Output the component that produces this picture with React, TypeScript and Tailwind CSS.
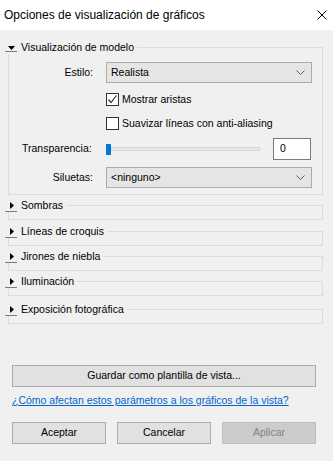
import { ReactNode } from 'react'

const font = { fontFamily: '"Liberation Sans", Arial, sans-serif' }

function Toggle({ open }: { open: boolean }) {
  if (open) {
    return (
      <div className="flex flex-col items-center w-[12px] h-[14px] pt-[6px]">
        <svg width="7" height="4" viewBox="0 0 7 4">
          <polygon points="0,0 7,0 3.5,4" fill="#000" />
        </svg>
        <div className="mt-[1px] h-px w-[12px] bg-[#7a7a7a]" />
      </div>
    )
  }
  return (
    <div className="flex flex-col items-center w-[12px] h-[14px] pt-[4px]">
      <svg width="4" height="7" viewBox="0 0 4 7" className="ml-[2px]">
        <polygon points="0,0 4,3.5 0,7" fill="#000" />
      </svg>
      <div className="mt-[2px] h-px w-[12px] bg-[#7a7a7a]" />
    </div>
  )
}

function Header({ title, open }: { title: string; open: boolean }) {
  return (
    <div className="flex h-[14px]">
      <Toggle open={open} />
      <span className="ml-[4px] leading-[14px] whitespace-nowrap">{title}</span>
      <div className="flex-1 ml-[3px] mt-[7px] h-[7px] border-t border-r border-[#dcdcdc]" />
    </div>
  )
}

function Section({ title, className }: { title: string; className: string }) {
  return (
    <div className={`ml-[5px] w-[318px] ${className}`}>
      <Header title={title} open={false} />
      <div className="ml-[3px] h-[8px] border-l border-r border-b border-[#dcdcdc]" />
    </div>
  )
}

function Chevron() {
  return (
    <svg width="9" height="5" viewBox="0 0 9 5">
      <polyline points="0.5,0.5 4.5,4.5 8.5,0.5" fill="none" stroke="#606060" strokeWidth="1" />
    </svg>
  )
}

function Select({ value }: { value: string }) {
  return (
    <div className="ml-[13px] w-[206px] h-[21px] bg-[#e5e5e5] border border-[#acacac] flex items-center justify-between pl-[4px] pr-[6px]">
      <span>{value}</span>
      <Chevron />
    </div>
  )
}

function Checkbox({ checked, children }: { checked: boolean; children: ReactNode }) {
  return (
    <div className="flex items-center h-[13px] ml-[97px]">
      <div className="w-[13px] h-[13px] bg-white border border-[#333] flex items-center justify-center">
        {checked && (
          <svg width="11" height="11" viewBox="0 0 11 11">
            <polyline points="1.5,5.5 4,8.5 9.5,1.5" fill="none" stroke="#333" strokeWidth="1.2" />
          </svg>
        )}
      </div>
      <span className="ml-[3px] whitespace-nowrap">{children}</span>
    </div>
  )
}

function Button({ children, disabled, className = '' }: { children: ReactNode; disabled?: boolean; className?: string }) {
  return (
    <div
      className={`h-[22px] flex items-center justify-center border ${
        disabled ? 'bg-[#cccccc] border-[#bfbfbf] text-[#838383]' : 'bg-[#e1e1e1] border-[#adadad] text-black'
      } ${className}`}
    >
      {children}
    </div>
  )
}

export default function App() {
  return (
    <div className="w-[333px] h-[461px] bg-[#f0f0f0] flex flex-col text-[10.5px] text-black" style={font}>
      {/* Title bar */}
      <div className="h-[30px] bg-white flex items-center justify-between pl-[4px] pr-[6px] shrink-0">
        <span className="text-[12px]">Opciones de visualización de gráficos</span>
        <svg width="10" height="10" viewBox="0 0 10 10">
          <path d="M0.5 0.5 L9.5 9.5 M9.5 0.5 L0.5 9.5" stroke="#000" strokeWidth="1" />
        </svg>
      </div>

      {/* Visualización de modelo */}
      <div className="ml-[5px] w-[318px] mt-[10px]">
        <Header title="Visualización de modelo" open />
        <div className="ml-[3px] h-[141px] flex flex-col border-l border-r border-b border-[#dcdcdc]">
          <div className="flex items-center mt-[8px] h-[21px]">
            <span className="w-[84px] text-right">Estilo:</span>
            <Select value="Realista" />
          </div>
          <div className="mt-[10px]">
            <Checkbox checked>Mostrar aristas</Checkbox>
          </div>
          <div className="mt-[11px]">
            <Checkbox checked={false}>Suavizar líneas con anti-aliasing</Checkbox>
          </div>
          <div className="flex items-center mt-[8px] h-[22px]">
            <span className="w-[97px] pl-[13px]">Transparencia:</span>
            <div className="w-[154px] h-[11px] flex items-center">
              <div className="w-[5px] h-[11px] bg-[#0078d7] shrink-0" />
              <div className="flex-1 h-[4px] bg-[#e7e7e7] border border-[#d6d6d6]" />
            </div>
            <div className="ml-[13px] w-[38px] h-[22px] bg-white border border-[#7a7a7a] flex items-center pl-[6px]">
              0
            </div>
          </div>
          <div className="flex items-center mt-[7px] h-[21px]">
            <span className="w-[84px] text-right">Siluetas:</span>
            <Select value="<ninguno>" />
          </div>
        </div>
      </div>

      <Section title="Sombras" className="mt-[3px]" />
      <Section title="Líneas de croquis" className="mt-[4px]" />
      <Section title="Jirones de niebla" className="mt-[3px]" />
      <Section title="Iluminación" className="mt-[3px]" />
      <Section title="Exposición fotográfica" className="mt-[6px]" />

      {/* Bottom area */}
      <Button className="mt-[41px] ml-[12px] w-[304px]">Guardar como plantilla de vista...</Button>
      <a className="mt-[6px] ml-[12px] leading-[14px] text-[#0066cc] underline whitespace-nowrap">
        ¿Cómo afectan estos parámetros a los gráficos de la vista?
      </a>
      <div className="mt-[15px] ml-[12px] flex gap-[11px]">
        <Button className="w-[94px]">Aceptar</Button>
        <Button className="w-[94px]">Cancelar</Button>
        <Button className="w-[94px]" disabled>
          Aplicar
        </Button>
      </div>
    </div>
  )
}
